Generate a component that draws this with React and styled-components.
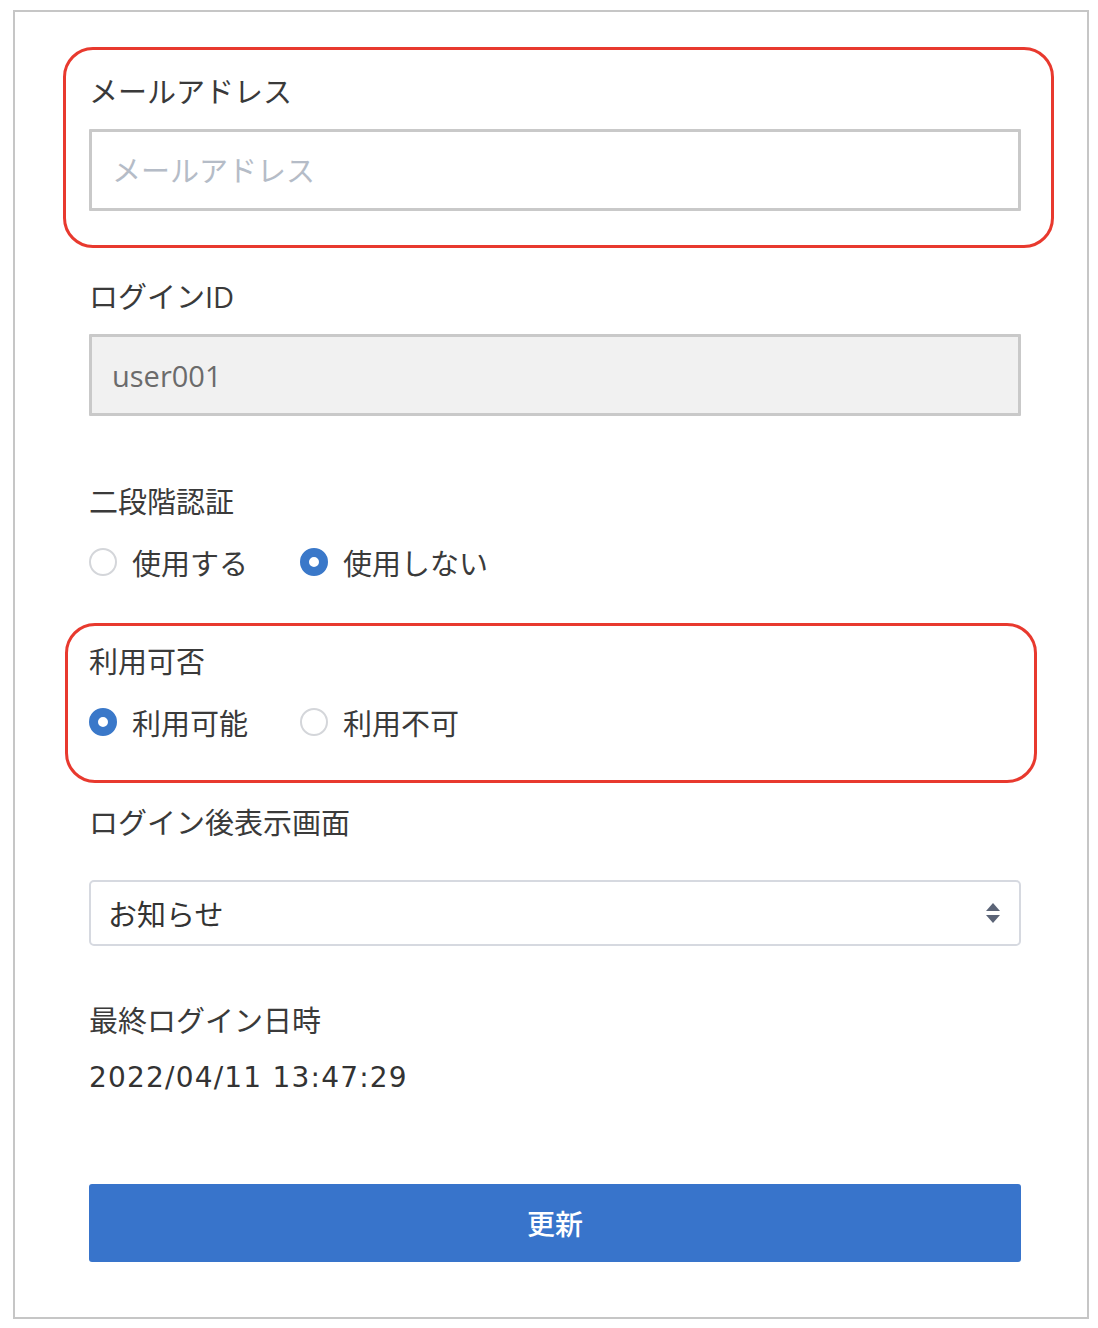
import React, { useState } from 'react';
import styled, { createGlobalStyle } from 'styled-components';

const GlobalStyle = createGlobalStyle`
  html, body {
    margin: 0;
    padding: 0;
    background: #ffffff;
  }
  body {
    font-family: "Noto Sans CJK JP", "Noto Sans", sans-serif;
    color: #3a3a3a;
  }
  * {
    box-sizing: border-box;
  }
`;

const Frame = styled.div`
  margin: 10px 0 0 13px;
  width: 1076px;
  border: 2px solid #c6c6c6;
  padding: 35px 66px 55px 74px;
  display: flex;
  flex-direction: column;
`;

const Highlight = styled.div`
  display: flex;
  flex-direction: column;
  border: 3px solid #e8392e;
  border-radius: 30px;
  margin: ${(p) => p.$margin};
  padding: ${(p) => p.$padding};
`;

const Label = styled.div`
  font-family: "Open Sans", "Noto Sans CJK JP", sans-serif;
  font-size: 29px;
  line-height: 40px;
  height: 40px;
  color: #3a3a3a;
  margin-top: ${(p) => p.$top || 0}px;
`;

const TextInput = styled.input`
  display: block;
  width: 100%;
  height: 82px;
  margin-top: 17px;
  border: 3px solid #c9c9c9;
  border-radius: 1px;
  padding: 0 20px;
  font-family: "Open Sans", "Noto Sans CJK JP", sans-serif;
  font-size: 29px;
  color: #6b6b6b;
  background: ${(p) => (p.readOnly ? '#f1f1f1' : '#ffffff')};
  outline: none;

  &::placeholder {
    color: #b5bcc7;
  }
`;

const RadioRow = styled.div`
  display: flex;
  align-items: center;
  gap: 52px;
  height: 40px;
  margin-top: 20px;
`;

const RadioOption = styled.label`
  display: flex;
  align-items: center;
  gap: 15px;
  font-size: 29px;
  line-height: 40px;
  color: #3a3a3a;
  cursor: pointer;
`;

const RadioDot = styled.span`
  width: 28px;
  height: 28px;
  border-radius: 50%;
  flex-shrink: 0;
  border: ${(p) => (p.$checked ? '9px solid #3a78c9' : '2px solid #d4d6da')};
  background: #ffffff;
`;

const SelectBox = styled.div`
  display: flex;
  align-items: center;
  justify-content: space-between;
  height: 66px;
  margin-top: 37px;
  border: 2px solid #d6d9e0;
  border-radius: 5px;
  padding: 0 18px 0 17px;
  font-size: 29px;
  color: #333333;
`;

const Value = styled.div`
  font-family: "DejaVu Sans", "Noto Sans CJK JP", sans-serif;
  font-size: 28px;
  letter-spacing: 1.2px;
  line-height: 40px;
  height: 40px;
  margin-top: 17px;
  color: #333333;
`;

const Button = styled.button`
  display: flex;
  align-items: center;
  justify-content: center;
  height: 78px;
  margin-top: 86px;
  border: none;
  border-radius: 3px;
  background: #3874cb;
  color: #ffffff;
  font-family: "Noto Sans CJK JP", "Noto Sans", sans-serif;
  font-size: 28px;
  font-weight: 500;
  cursor: pointer;
`;

const Radio = ({ checked, onSelect, children }) => (
  <RadioOption onClick={onSelect}>
    <RadioDot $checked={checked} />
    {children}
  </RadioOption>
);

const SortArrows = () => (
  <svg width="16" height="22" viewBox="0 0 16 22">
    <path d="M8 1 L15 9 L1 9 Z" fill="#5b6477" />
    <path d="M1 13 L15 13 L8 21 Z" fill="#5b6477" />
  </svg>
);

export default function App() {
  const [twoFactor, setTwoFactor] = useState('off');
  const [available, setAvailable] = useState('on');

  return (
    <>
      <GlobalStyle />
      <Frame>
        <Highlight $margin="0 -33px 0 -26px" $padding="22px 30px 34px 23px">
          <Label>メールアドレス</Label>
          <TextInput placeholder="メールアドレス" />
        </Highlight>

        <Label $top={29}>ログインID</Label>
        <TextInput readOnly value="user001" />

        <Label $top={66}>二段階認証</Label>
        <RadioRow>
          <Radio checked={twoFactor === 'on'} onSelect={() => setTwoFactor('on')}>
            使用する
          </Radio>
          <Radio checked={twoFactor === 'off'} onSelect={() => setTwoFactor('off')}>
            使用しない
          </Radio>
        </RadioRow>

        <Highlight $margin="41px -16px 0 -24px" $padding="16px 13px 38px 21px">
          <Label>利用可否</Label>
          <RadioRow>
            <Radio checked={available === 'on'} onSelect={() => setAvailable('on')}>
              利用可能
            </Radio>
            <Radio checked={available === 'off'} onSelect={() => setAvailable('off')}>
              利用不可
            </Radio>
          </RadioRow>
        </Highlight>

        <Label $top={20}>ログイン後表示画面</Label>
        <SelectBox>
          <span>お知らせ</span>
          <SortArrows />
        </SelectBox>

        <Label $top={55}>最終ログイン日時</Label>
        <Value>2022/04/11 13:47:29</Value>

        <Button>更新</Button>
      </Frame>
    </>
  );
}
